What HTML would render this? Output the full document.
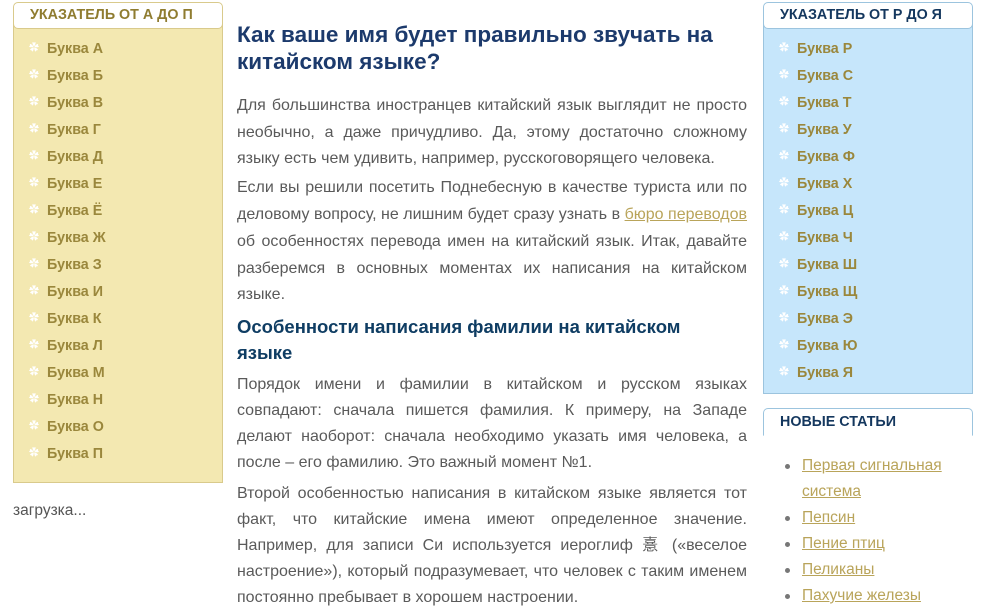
<!DOCTYPE html>
<html><head><meta charset="utf-8"><style>
*{margin:0;padding:0;box-sizing:border-box}
body{width:991px;height:615px;background:#fff;position:relative;overflow:hidden;font-family:"Liberation Sans","Noto Sans CJK SC",sans-serif}
.panel{position:absolute;border:1px solid}
.hdr{position:absolute;background:#fff;border:1px solid;border-radius:5px;font-weight:bold;font-size:14.3px;line-height:25px;padding-left:16px}
.mi{position:absolute;font-weight:bold;font-size:14.3px;color:#9a873c;line-height:20px}
.mi:before{content:"✿";position:absolute;left:-18px;top:0;font-size:10px;color:#fff}
.l{position:absolute;left:237px;width:510px;font-size:16px;line-height:26px;height:26px;color:#5a5a5a;text-align:justify;text-align-last:justify;overflow:hidden}
.l.e{text-align-last:left}
.t{position:absolute;left:237px;font-weight:bold;font-size:22.5px;color:#1c3a6c;line-height:27px}
.h{position:absolute;left:237px;font-weight:bold;font-size:18.5px;color:#0f3d63;line-height:26px}
a{color:#b9a45a;text-decoration:underline}
.na{position:absolute;left:802px;font-size:15.5px;line-height:26px;color:#b9a45a;text-decoration:underline}
.dot{position:absolute;left:785px;width:5px;height:5px;border-radius:50%;background:#777}
</style></head><body>
<div class="panel" style="left:13px;top:14px;width:210px;height:469px;background:#f3e8b1;border-color:#d9ca8c"></div>
<div class="hdr" style="left:13px;top:2px;width:210px;height:27px;border-color:#d9ca8c;color:#8f7c30">УКАЗАТЕЛЬ ОТ А ДО П</div>
<div class="mi" style="left:47px;top:39px">Буква А</div>
<div class="mi" style="left:47px;top:66px">Буква Б</div>
<div class="mi" style="left:47px;top:93px">Буква В</div>
<div class="mi" style="left:47px;top:120px">Буква Г</div>
<div class="mi" style="left:47px;top:147px">Буква Д</div>
<div class="mi" style="left:47px;top:174px">Буква Е</div>
<div class="mi" style="left:47px;top:201px">Буква Ё</div>
<div class="mi" style="left:47px;top:228px">Буква Ж</div>
<div class="mi" style="left:47px;top:255px">Буква З</div>
<div class="mi" style="left:47px;top:282px">Буква И</div>
<div class="mi" style="left:47px;top:309px">Буква К</div>
<div class="mi" style="left:47px;top:336px">Буква Л</div>
<div class="mi" style="left:47px;top:363px">Буква М</div>
<div class="mi" style="left:47px;top:390px">Буква Н</div>
<div class="mi" style="left:47px;top:417px">Буква О</div>
<div class="mi" style="left:47px;top:444px">Буква П</div>
<div style="position:absolute;left:13px;top:502px;font-size:15.5px;color:#555">загрузка...</div>

<div class="panel" style="left:763px;top:14px;width:210px;height:380px;background:#c6e6fb;border-color:#9cc4de"></div>
<div class="hdr" style="left:763px;top:2px;width:210px;height:27px;border-color:#9cc4de;color:#14375e">УКАЗАТЕЛЬ ОТ Р ДО Я</div>
<div class="mi" style="left:797px;top:39px">Буква Р</div>
<div class="mi" style="left:797px;top:66px">Буква С</div>
<div class="mi" style="left:797px;top:93px">Буква Т</div>
<div class="mi" style="left:797px;top:120px">Буква У</div>
<div class="mi" style="left:797px;top:147px">Буква Ф</div>
<div class="mi" style="left:797px;top:174px">Буква Х</div>
<div class="mi" style="left:797px;top:201px">Буква Ц</div>
<div class="mi" style="left:797px;top:228px">Буква Ч</div>
<div class="mi" style="left:797px;top:255px">Буква Ш</div>
<div class="mi" style="left:797px;top:282px">Буква Щ</div>
<div class="mi" style="left:797px;top:309px">Буква Э</div>
<div class="mi" style="left:797px;top:336px">Буква Ю</div>
<div class="mi" style="left:797px;top:363px">Буква Я</div>
<div class="hdr" style="left:763px;top:408px;width:210px;height:28px;border-color:#9cc4de;color:#14375e;border-bottom-color:transparent;border-radius:5px 5px 0 0;line-height:27px">НОВЫЕ СТАТЬИ</div>
<div class="dot" style="top:464px"></div><div class="na" style="top:453px">Первая сигнальная</div>
<div class="na" style="top:479px">система</div>
<div class="dot" style="top:516px"></div><div class="na" style="top:505px">Пепсин</div>
<div class="dot" style="top:542px"></div><div class="na" style="top:531px">Пение птиц</div>
<div class="dot" style="top:568px"></div><div class="na" style="top:557px">Пеликаны</div>
<div class="dot" style="top:594px"></div><div class="na" style="top:583px">Пахучие железы</div>

<div class="t" style="top:21px">Как ваше имя будет правильно звучать на</div>
<div class="t" style="top:48px">китайском языке?</div>
<div class="l" style="top:93px">Для большинства иностранцев китайский язык выглядит не просто</div>
<div class="l" style="top:120px">необычно, а даже причудливо. Да, этому достаточно сложному</div>
<div class="l e" style="top:146px">языку есть чем удивить, например, русскоговорящего человека.</div>
<div class="l" style="top:175px">Если вы решили посетить Поднебесную в качестве туриста или по</div>
<div class="l" style="top:202px">деловому вопросу, не лишним будет сразу узнать в <a>бюро переводов</a></div>
<div class="l" style="top:229px">об особенностях перевода имен на китайский язык. Итак, давайте</div>
<div class="l" style="top:256px">разберемся в основных моментах их написания на китайском</div>
<div class="l e" style="top:282px">языке.</div>
<div class="h" style="top:314px">Особенности написания фамилии на китайском</div>
<div class="h" style="top:340px">языке</div>
<div class="l" style="top:372px">Порядок имени и фамилии в китайском и русском языках</div>
<div class="l" style="top:398px">совпадают: сначала пишется фамилия. К примеру, на Западе</div>
<div class="l" style="top:424px">делают наоборот: сначала необходимо указать имя человека, а</div>
<div class="l e" style="top:450px">после – его фамилию. Это важный момент №1.</div>
<div class="l" style="top:481px">Второй особенностью написания в китайском языке является тот</div>
<div class="l" style="top:507px">факт, что китайские имена имеют определенное значение.</div>
<div class="l" style="top:533px">Например, для записи Си используется иероглиф 憙 («веселое</div>
<div class="l" style="top:559px">настроение»), который подразумевает, что человек с таким именем</div>
<div class="l e" style="top:585px">постоянно пребывает в хорошем настроении.</div>
</body></html>
